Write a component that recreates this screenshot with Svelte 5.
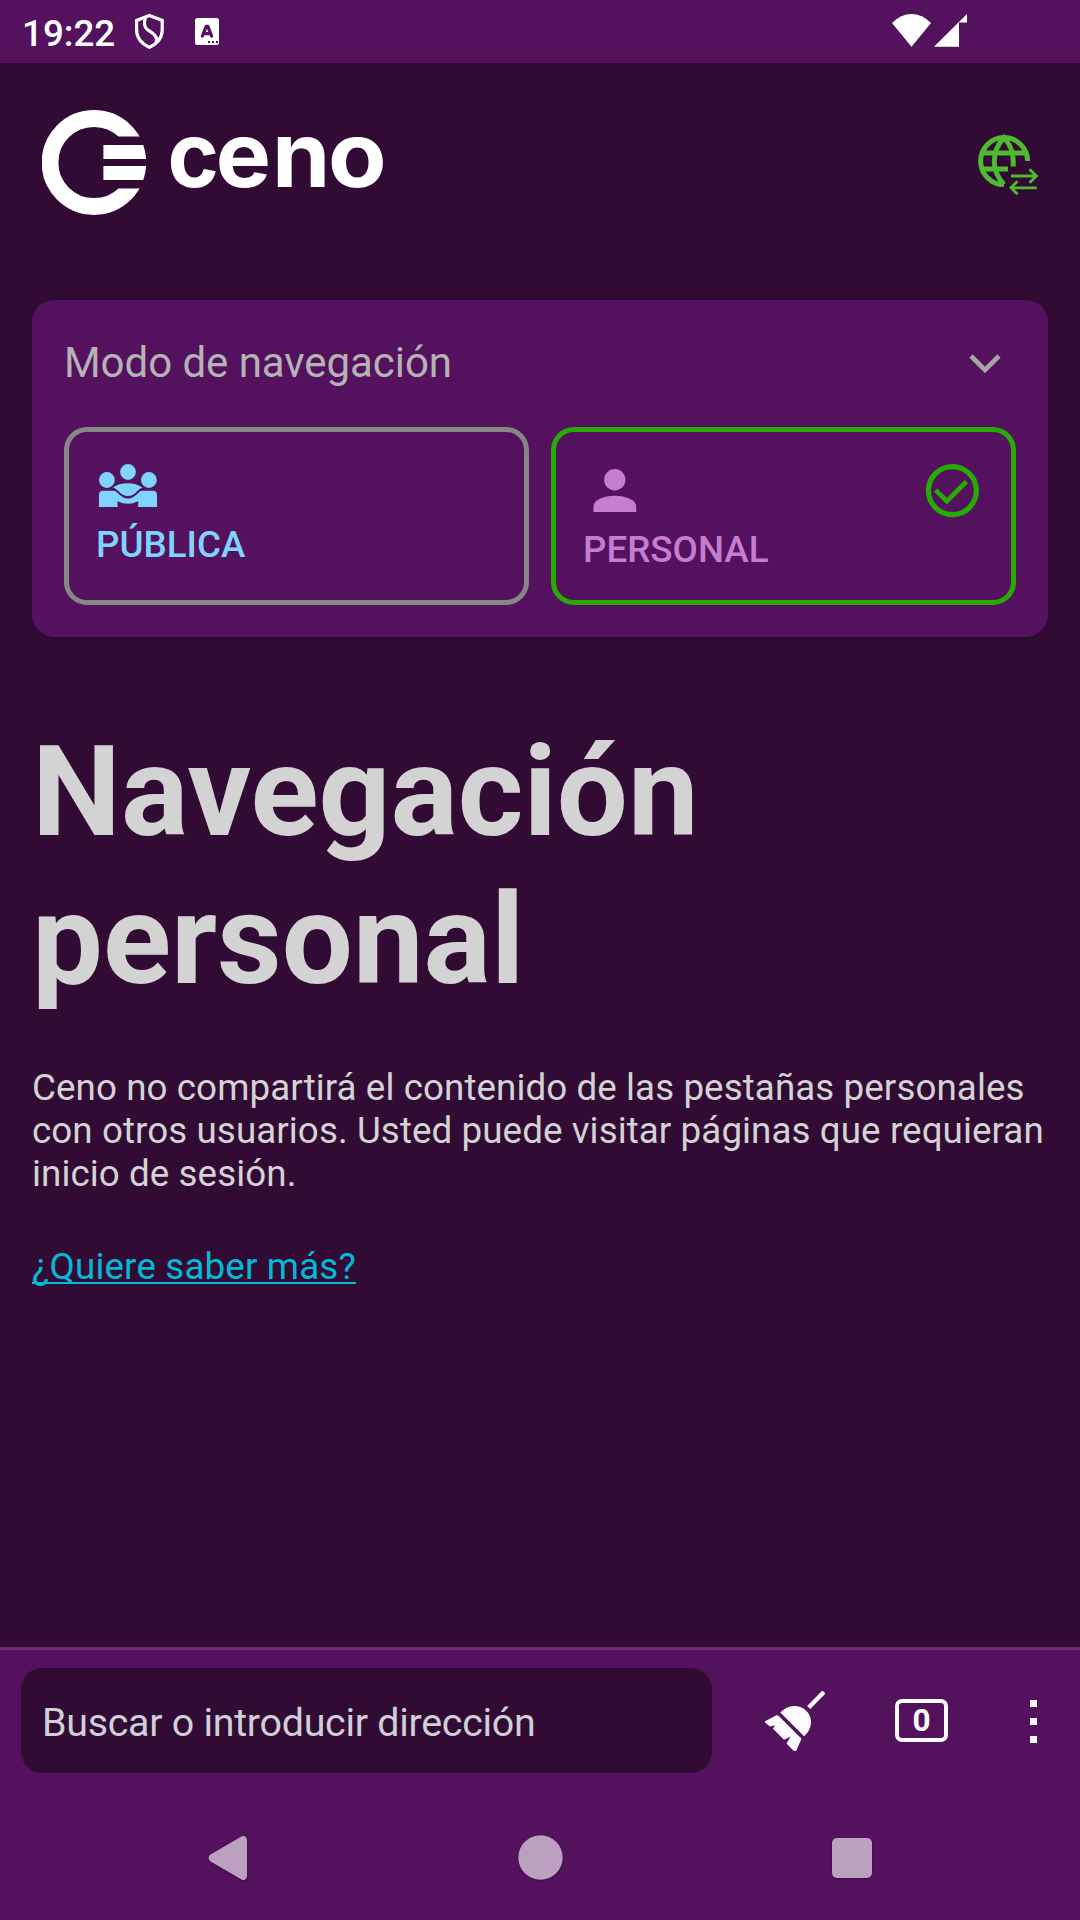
<script>
  const modeLabel = 'Modo de navegación';
  const letters = [
    { glyph: 'c', x: 167.5, stretch: 0.96 },
    { glyph: 'e', x: 215.8, stretch: 1.02 },
    { glyph: 'n', x: 272, stretch: 1.03 },
    { glyph: 'o', x: 328, stretch: 1.05 }
  ];
  const tabs = 0;
</script>

<div class="phone">
  <header class="status">
    <span class="clock">19:22</span>
    <svg class="shield" width="31" height="37" viewBox="134 13 31 37" fill="none" stroke="#fff" stroke-width="3.2">
      <path d="M149.4 15.4 L162.2 20.4 V30 C162.2 37.5 157.5 43.5 149.4 47.4 C141.3 43.5 136.6 37.5 136.6 30 V20.4Z" />
      <path d="M145.5 17.2 C144 22 143.8 26.8 147.3 29.5 C151.5 32.7 158.2 35.5 156.5 42.3" />
    </svg>
    <svg class="app-a" width="24" height="27" viewBox="195 18 24 27">
      <rect x="195" y="18" width="24" height="27" rx="2.5" fill="#fff" />
      <path d="M202.4 36 L206.2 26.4 H207.8 L211.6 36 M203.6 33.6 H210.4" fill="none" stroke="#54115e" stroke-width="3.3" stroke-linecap="round" stroke-linejoin="round" />
      <path d="M208 41h2v2h-2zM212 41h2v2h-2zM216 41h2v2h-2z" fill="#54115e" />
    </svg>
    <svg class="signals" width="76" height="34" viewBox="892 13 76 34" fill="#fff">
      <path d="M892 23 Q901 14 911.5 14 Q922 14 931 23 L911.5 46.8Z" />
      <path d="M934 46.8 L967 14 V22.6 H959 V46.8Z" />
    </svg>
  </header>

  <main>
    <div class="brand">
      <svg width="370" height="145" viewBox="42 83 370 145" role="img" aria-label="ceno">
        <defs>
          <clipPath id="ring">
            <path d="M40 105H150V136.4H100V188.6H150V220H40Z" />
          </clipPath>
          <clipPath id="disc"><circle cx="94" cy="162.5" r="52.2" /></clipPath>
        </defs>
        <circle cx="94" cy="162.5" r="44" fill="none" stroke="#fff" stroke-width="16.8" clip-path="url(#ring)" />
        <path d="M103.4 145H147V159H103.4ZM103.4 166H147V180H103.4Z" fill="#fff" clip-path="url(#disc)" />
        <g class="wordmark">
          {#each letters as l}
            <text transform={`translate(${l.x} 187) scale(${l.stretch} 1)`}>{l.glyph}</text>
          {/each}
        </g>
      </svg>
      <svg class="globe" width="62" height="62" viewBox="977 134 62 62" fill="none" stroke="#4fb92f" stroke-width="5">
        <path d="M1027.6 161 A23.5 23.5 0 1 0 1004 184.6" />
        <path d="M1003.9 184.6 C991 170 991 152 1003.9 137.6 C1010 144 1013.2 152 1013.2 160.5 V166.5" />
        <path d="M982.5 153H1025.5M982.5 169H1008" />
        <path d="M1011 176H1037M1029.5 169.3L1036.4 176L1029.5 182.7M1036.7 187.8H1011M1017.5 181.2L1011 187.8L1017.5 194.3" stroke-width="2.8" />
      </svg>
    </div>

    <section class="card">
      <div class="card-head">
        <span>{modeLabel}</span>
        <svg width="32" height="20" viewBox="0 0 32 20" fill="none" stroke="#a5a5a5" stroke-width="4.6"><path d="M2 2L16 16L30 2" /></svg>
      </div>
      <div class="modes">
        <div class="mode public">
          <svg width="60" height="43" viewBox="0 0 60 43" fill="#7fd4ff">
            <circle cx="30" cy="8" r="7.9" /><circle cx="8.9" cy="16" r="7.9" /><circle cx="50.9" cy="16" r="7.9" />
            <path d="M15 23.5 C22 17.7 37 17.7 44.5 23.5 C38 26 37.5 32 30 32 C22.5 32 21.5 26 15 23.5Z" />
            <path d="M1 43V30.5Q1 26.7 5 26.7H15C20.5 26.7 22 34.5 30 34.5S39.3 26.7 44.8 26.7H55Q59 26.7 59 31V43H40.2V37.2Q30 42.5 19.5 37.2V43Z" />
          </svg>
          <span>PÚBLICA</span>
        </div>
        <div class="mode personal">
          <div class="row">
            <svg class="person" width="44" height="43" viewBox="0 0 44 43" fill="#c57cd1">
              <circle cx="21.8" cy="10.8" r="10.7" />
              <path d="M.5 43V37C.5 31 10.5 26.7 21.8 26.7S43.2 31 43.2 37V43Z" />
            </svg>
            <svg class="check" width="54" height="54" viewBox="0 0 54 54" fill="none" stroke="#25ab04">
              <circle cx="27.4" cy="26.6" r="24" stroke-width="5.2" />
              <path d="M10.7 26.1L21.9 37.1L41.4 17.6" stroke-width="4.8" />
            </svg>
          </div>
          <span>PERSONAL</span>
        </div>
      </div>
    </section>

    <h1>Navegación<br />personal</h1>
    <p>Ceno no compartirá el contenido de las pestañas personales<br />con otros usuarios. Usted puede visitar páginas que requieran<br />inicio de sesión.</p>
    <a href="#mas">¿Quiere saber más?</a>
  </main>

  <footer class="toolbar">
    <div class="address">Buscar o introducir dirección</div>
    <svg class="broom" width="60" height="60" viewBox="765 1691 60 60" fill="#fbfbfe">
      <path d="M808.7 1707.5L824 1692" stroke="#fbfbfe" stroke-width="4.4" />
      <path d="M780.3 1712.6C785 1707.5 791 1705.5 795.5 1706C804.5 1706.5 810.5 1713.5 811 1721C811.2 1727 808.5 1733 804 1736.2Z" />
      <path d="M765 1721.2L776 1715.5Q777.5 1714.7 779 1716.2L801.5 1738.7L796.3 1750.8H793.5L786.5 1743.5L790.5 1736.8L784 1739.7L773 1728.7L775 1725.2L770 1726.6L765 1722.5Z" />
    </svg>
    <div class="tabs">{tabs}</div>
    <div class="dots"><i></i><i></i><i></i></div>
  </footer>

  <nav>
    <svg width="42" height="46" viewBox="0 0 42 46"><path d="M5 21L35.5 3.2Q38 2.4 38 5.5V40.5Q38 43.6 35.5 42.8L5 25Q2 23 5 21Z" fill="#bba1bf" stroke="#bba1bf" stroke-width="4" stroke-linejoin="round" /></svg>
    <svg width="45" height="45" viewBox="0 0 45 45"><circle cx="22.5" cy="22.5" r="22.2" fill="#bba1bf" /></svg>
    <svg width="40" height="40" viewBox="0 0 40 40"><rect width="40" height="40" rx="5" fill="#bba1bf" /></svg>
  </nav>
</div>

<style>
  :global(body) { margin: 0; background: #320b35; }
  svg { display: block; flex: none; }
  .phone {
    width: 1080px; height: 1920px; display: flex; flex-direction: column;
    background: #320b35; color: #d3d3d3; font-family: Roboto, sans-serif; overflow: hidden;
  }
  .status {
    box-sizing: border-box; height: 63px; flex: none; display: flex; align-items: flex-start;
    background: #54115e; color: #fff; padding: 13px 112px 0 22px;
  }
  .clock { width: 112px; font-size: 36.75px; font-weight: 500; line-height: 41px; }
  .app-a { margin: 5px 0 0 30px; }
  .signals { margin-left: auto; }
  main { flex: 1; padding: 20px 32px 0; }
  .brand { display: flex; justify-content: space-between; align-items: flex-start; height: 217px; padding: 0 9px 0 10px; }
  .wordmark { font: 700 91px Inter, sans-serif; fill: #fff; }
  .globe { margin-top: 51px; }
  .card {
    box-sizing: border-box; height: 337px; padding: 0 32px; border-radius: 22px; background: #54115e;
    box-shadow: 0 2px 5px rgba(0, 0, 0, .15);
  }
  .card-head { display: flex; align-items: center; justify-content: space-between; height: 127px; padding-right: 15.5px; font-size: 42px; letter-spacing: -.05px; color: #b3b3b3; }
  .card-head span { margin-bottom: 2px; }
  .modes { display: grid; grid-template-columns: 1fr 1fr; gap: 22px; }
  .mode { box-sizing: border-box; height: 178px; border: 5px solid #868686; border-radius: 23px; font-size: 36.75px; font-weight: 500; line-height: 43px; }
  .public { padding: 32px 27px; color: #7fd4ff; }
  .public svg { margin-left: 1.5px; }
  .public span, .personal span { display: block; }
  .public span { margin-top: 16px; }
  .personal { border-color: #25ab04; padding: 32px 32px 0 27px; color: #c57cd1; }
  .row { display: flex; justify-content: space-between; }
  .person { margin: 5px 0 0 10px; }
  .personal span { margin-top: 10px; }
  h1 { margin: 81px 0 0; font-size: 126px; font-weight: 700; line-height: 148px; }
  p { margin: 52px 0 0; font-size: 36.75px; line-height: 43px; letter-spacing: .08px; white-space: nowrap; }
  a { display: inline-block; margin-top: 50px; font-size: 36.75px; line-height: 43px; letter-spacing: .15px; color: #00bad6; text-decoration: underline; text-decoration-thickness: 2px; text-underline-offset: 3px; text-decoration-skip-ink: none; }
  .toolbar {
    box-sizing: border-box; height: 153px; flex: none; display: flex; align-items: flex-start;
    background: #54115e; border-top: 3px solid #6b2d74; padding: 18px 0 0 21px;
  }
  .address { box-sizing: border-box; width: 691px; height: 105px; border-radius: 21px; background: #320b35; padding-left: 21px; font-size: 39.4px; letter-spacing: -.28px; line-height: 109px; color: #cfcfd8; }
  .broom { margin: 23px 0 0 53px; }
  .tabs { box-sizing: border-box; width: 53px; height: 43px; margin: 31px 0 0 70px; border: 4.5px solid #fbfbfe; border-radius: 7px; font-size: 31.5px; font-weight: 700; line-height: 36px; text-align: center; color: #fbfbfe; }
  .dots { display: flex; flex-direction: column; gap: 11px; margin: 32px 0 0 82px; }
  .dots i { width: 7px; height: 7px; background: #fbfbfe; }
  nav { height: 120px; flex: none; display: flex; align-items: center; justify-content: space-between; background: #54115e; padding: 0 208px 5px 207px; box-sizing: border-box; }
  nav svg { filter: drop-shadow(0 1px 1px rgba(40, 0, 50, .5)); }
</style>
